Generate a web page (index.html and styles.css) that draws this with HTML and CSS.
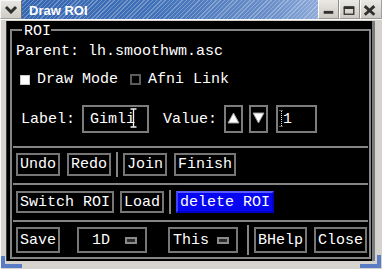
FILE: index.html
```html
<!DOCTYPE html>
<html>
<head>
<meta charset="utf-8">
<title>Draw ROI</title>
<link rel="stylesheet" href="styles.css">
</head>
<body>
<div class="window">
  <div class="titlebar">
    <div class="tb-menu">
      <svg width="14" height="9" viewBox="0 0 14 9"><polyline points="2,2 7,7 12,2" fill="none" stroke="#303030" stroke-width="3"/></svg>
    </div>
    <div class="tb-title">Draw ROI</div>
    <div class="tb-btn tb-min">
      <svg width="21" height="18" viewBox="0 0 21 18"><rect x="6" y="11" width="10" height="3" fill="#303030"/></svg>
    </div>
    <div class="tb-btn tb-max">
      <svg width="21" height="18" viewBox="0 0 21 18"><rect x="5.5" y="7.5" width="10" height="7" fill="none" stroke="#303030" stroke-width="1.4"/><rect x="5" y="6" width="11" height="3" fill="#303030"/></svg>
    </div>
    <div class="tb-btn tb-close">
      <svg width="22" height="18" viewBox="0 0 22 18"><path d="M5 6 L15 15 M15 6 L5 15" stroke="#303030" stroke-width="3"/></svg>
    </div>
  </div>
  <div class="frame">
    <div class="client">
      <div class="group">
        <span class="legend">ROI</span>
        <div class="row-parent">Parent: lh.smoothwm.asc</div>
        <div class="toggles">
          <span class="check check-on"></span><span class="toggle-text">Draw Mode</span>
          <span class="check check-off"></span><span class="toggle-text">Afni Link</span>
        </div>
        <div class="labelrow">
          <span class="lbl">Label:</span>
          <span class="field field-label">Gimli<svg class="ibeam" width="7" height="20" viewBox="0 0 7 20"><path d="M0.5 1 H6.5 M3.5 1 V19 M0.5 19 H6.5" stroke="#f2f2f2" stroke-width="1.3" fill="none"/></svg></span>
          <span class="lbl lbl-value">Value:</span>
          <span class="arrow arrow-up"><svg width="15" height="24" viewBox="0 0 15 24"><polygon points="7.5,6 2,16 13,16" fill="#ffffff" stroke="#9a9a9a" stroke-width="1"/></svg></span>
          <span class="arrow arrow-down"><svg width="15" height="24" viewBox="0 0 15 24"><polygon points="2,6 13,6 7.5,16" fill="#ffffff" stroke="#9a9a9a" stroke-width="1"/></svg></span>
          <span class="field field-value"><svg class="dotcur" width="5" height="17" viewBox="0 0 5 17"><path d="M2.5 1 V16" stroke="#e0e0e0" stroke-width="1" stroke-dasharray="1 1" fill="none"/><path d="M0.5 0.5 H4.5 M0.5 16.5 H4.5" stroke="#bdbdbd" stroke-width="1" stroke-dasharray="1 1" fill="none"/></svg><span class="val">1</span></span>
        </div>
        <div class="sep"></div>
        <div class="btnrow row-d">
          <span class="btn">Undo</span>
          <span class="btn">Redo</span>
          <span class="vsep"></span>
          <span class="btn">Join</span>
          <span class="btn">Finish</span>
        </div>
        <div class="sep"></div>
        <div class="btnrow row-e">
          <span class="btn">Switch ROI</span>
          <span class="btn">Load</span>
          <span class="vsep"></span>
          <span class="btn btn-active">delete ROI</span>
        </div>
        <div class="sep"></div>
        <div class="btnrow row-f">
          <span class="btn">Save</span>
          <span class="btn opt opt-1d"><span>1D</span><span class="ind"></span></span>
          <span class="btn opt opt-this"><span>This</span><span class="ind"></span></span>
          <span class="vsep vsep-f"></span>
          <span class="btn">BHelp</span>
          <span class="btn">Close</span>
        </div>
      </div>
    </div>
  </div>
  <span class="corner corner-bl"></span>
  <span class="corner corner-br"></span>
</div>
</body>
</html>
```
FILE: styles.css
```css
* { box-sizing: border-box; }
html, body { margin: 0; padding: 0; }
body {
  width: 382px;
  height: 269px;
  overflow: hidden;
  background: #d4d0c8;
  font-family: "Liberation Mono", "DejaVu Sans Mono", monospace;
  font-size: 15px;
  line-height: 15px;
  color: #ffffff;
}
.window {
  position: relative;
  width: 382px;
  height: 269px;
  display: flex;
  flex-direction: column;
  background: #d6d3ce;
}
.titlebar {
  flex: none;
  height: 19px;
  display: flex;
}
.tb-menu {
  width: 22px;
  height: 19px;
  background: linear-gradient(#e8e6e2, #cfccc6);
  border-top: 1px solid #f7f7f7;
  border-left: 1px solid #f7f7f7;
  border-right: 1px solid #6c6c6c;
  border-bottom: 1px solid #a0a0a0;
  display: flex;
  align-items: center;
  justify-content: center;
}
.tb-title {
  flex: 1;
  height: 19px;
  padding: 1px 0 0 7px;
  font: bold 13px/19px "Liberation Sans", Arial, sans-serif;
  color: #ffffff;
  background-image:
    repeating-linear-gradient(135deg, rgba(255,255,255,0) 0 2px, rgba(255,255,255,0.28) 2px 3px),
    linear-gradient(to right, #3666b0 0%, #4171b8 45%, #6b90ca 85%, #8eabd9 100%);
}
.tb-btn {
  width: 21px;
  height: 19px;
  background: linear-gradient(#ebe9e5, #cdc9c2);
  border-left: 1px solid #fbfbfb;
  border-right: 1px solid #8c8c8c;
  border-bottom: 1px solid #9a9a9a;
  display: flex;
  align-items: flex-start;
  justify-content: flex-start;
}
.tb-btn svg { margin-left: -1px; }
.tb-close { width: 22px; border-right: 1px solid #a0a0a0; }

.frame {
  flex: 1;
  display: flex;
  border-top: 1px solid #fbfbfb;
  border-left: 1px solid #fbfbfb;
  padding: 1px 7px 8px 5px;
}
.client {
  flex: 1;
  display: flex;
  background: #000000;
  border-left: 1px solid #3a3a3a;
  border-right: 3px solid #7a7a7a;
}
.group {
  position: relative;
  flex: 1;
  display: flex;
  flex-direction: column;
  margin: 8px 1px 2px 3px;
  border: 2px solid #858585;
}
.legend {
  position: absolute;
  top: -7px;
  left: 10px;
  height: 15px;
  padding: 0 0 0 2px;
  background: #000000;
}
.row-parent {
  margin: 13px 0 0 4px;
  height: 15px;
  white-space: pre;
}
.toggles {
  margin: 13px 0 0 8px;
  height: 15px;
  display: flex;
  align-items: center;
}
.check {
  width: 10px;
  height: 10px;
  margin-right: 7px;
}
.check-on {
  background: #ffffff;
  border: 1px solid #c8c8c8;
}
.check-off {
  margin-left: 12px;
  border: 2px solid #5c5c5c;
  width: 11px;
  height: 11px;
}
.toggle-text { white-space: pre; }

.labelrow {
  margin: 18px 0 0 9px;
  height: 28px;
  display: flex;
  align-items: center;
}
.lbl { white-space: pre; }
.field {
  height: 28px;
  border: 2px solid #7c7c7c;
  display: flex;
  align-items: center;
}
.field-label {
  width: 67px;
  margin-left: 7px;
  padding-left: 6px;
}
.ibeam { margin-left: -5px; margin-top: -3px; }
.lbl-value { margin-left: 14px; }
.arrow {
  width: 19px;
  height: 28px;
  border: 2px solid #7c7c7c;
  display: flex;
  align-items: center;
  justify-content: center;
}
.arrow-up { margin-left: 7px; }
.arrow-down { margin-left: 6px; }
.field-value {
  width: 41px;
  margin-left: 8px;
  padding-left: 1px;
}
.dotcur { margin-top: -1px; }
.val { margin-left: -1px; }

.sep {
  margin: 13px 1px 0 1px;
  height: 2px;
  background: #858585;
  flex: none;
}
.btnrow + .sep { margin-top: 7px; }
.btnrow {
  display: flex;
  align-items: stretch;
  padding-left: 4px;
}
.row-d { margin-top: 5px; height: 23px; }
.row-e { margin-top: 6px; height: 22px; }
.row-f { margin-top: 5px; height: 26px; }
.btn {
  border: 2px solid #767676;
  padding: 0 2px;
  display: flex;
  align-items: center;
  white-space: pre;
}
.btn + .btn { margin-left: 7px; }
.row-e .btn + .btn { margin-left: 6px; }
.btn-active {
  background: #0606f2;
  border-color: #5a5aff #0000c8 #0000c8 #4040ff;
}
.vsep {
  width: 2px;
  margin: -1px 5px;
  background: #858585;
}
.vsep-f { margin: -2px 5px -2px 9px; }
.opt {
  width: 70px;
  justify-content: space-between;
}
.row-f .opt-1d { margin-left: 17px; padding: 0 8px 0 13px; }
.row-f .opt-this { margin-left: 21px; padding: 0 7px 0 3px; }
.ind {
  width: 12px;
  height: 7px;
  border: 2px solid #8a8a8a;
  background: #2a2a2a;
}

.corner {
  position: absolute;
}
.corner-bl {
  left: 1px;
  bottom: 1px;
  width: 21px;
  height: 12px;
  border-left: 4px solid #5a7cc4;
  border-bottom: 4px solid #5a7cc4;
}
.corner-br {
  right: 1px;
  bottom: 1px;
  width: 21px;
  height: 13px;
  border-right: 4px solid #5a7cc4;
  border-bottom: 4px solid #5a7cc4;
}
```
